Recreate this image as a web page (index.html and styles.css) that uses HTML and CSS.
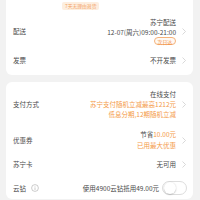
FILE: index.html
```html
<!DOCTYPE html>
<html>
<head>
<meta charset="utf-8">
<link rel="stylesheet" href="styles.css">
</head>
<body>
<div class="card card-top">
  <div class="badge-row"><span class="tag-soft">7天无理由退货</span></div>
  <div class="row row-delivery">
    <span class="label">配送</span>
    <div class="values">
      <span class="line">苏宁配送</span>
      <span class="line">12-07(周六)09:00-21:00</span>
      <span class="tag-outline">次日达</span>
    </div>
    <svg class="chev" viewBox="0 0 4 7"><polyline points="0.5,0.5 3.5,3.5 0.5,6.5"/></svg>
  </div>
  <div class="row row-invoice">
    <span class="label">发票</span>
    <div class="values"><span class="line">不开发票</span></div>
    <svg class="chev" viewBox="0 0 4 7"><polyline points="0.5,0.5 3.5,3.5 0.5,6.5"/></svg>
  </div>
</div>
<div class="card card-pay">
  <div class="row row-pay">
    <span class="label">支付方式</span>
    <div class="values">
      <span class="line">在线支付</span>
      <span class="line orange">苏宁支付随机立减最高1212元</span>
      <span class="line orange">低息分期,12期随机立减</span>
    </div>
    <svg class="chev" viewBox="0 0 4 7"><polyline points="0.5,0.5 3.5,3.5 0.5,6.5"/></svg>
  </div>
  <div class="row row-coupon">
    <span class="label">优惠券</span>
    <div class="values">
      <span class="line line-11">节省<em class="orange">10.00元</em></span>
      <span class="line line-11 orange">已用最大优惠</span>
    </div>
    <svg class="chev" viewBox="0 0 4 7"><polyline points="0.5,0.5 3.5,3.5 0.5,6.5"/></svg>
  </div>
  <div class="row row-card">
    <span class="label">苏宁卡</span>
    <div class="values"><span class="line">无可用</span></div>
    <svg class="chev" viewBox="0 0 4 7"><polyline points="0.5,0.5 3.5,3.5 0.5,6.5"/></svg>
  </div>
  <div class="row row-diamond">
    <span class="label">云钻</span>
    <svg class="info" viewBox="0 0 8 8"><circle cx="4" cy="4" r="3.4"/><line x1="4" y1="3.4" x2="4" y2="6"/><line x1="4" y1="2" x2="4" y2="2.6"/></svg>
    <div class="values"><span class="line">使用4900云钻抵用49.00元</span></div>
    <span class="toggle"><span class="knob"></span></span>
  </div>
</div>
</body>
</html>
```
FILE: styles.css
```css
* { box-sizing: border-box; }
html, body { margin: 0; padding: 0; }
body {
  background: #f2f2f2;
  font-family: "Noto Sans CJK SC", "Noto Sans", sans-serif;
  font-size: 6.5px;
  color: #4a4a4a;
  width: 200px;
  height: 200px;
  overflow: hidden;
}
.card {
  background: #fff;
  border-radius: 6px;
  margin: 0 7px 0 6px;
  padding: 0 7px;
}
.card-top { margin-top: -8px; }
.card-pay { margin-top: 7px; }
.badge-row { padding: 8px 0 0 49px; height: 16px; }
.tag-soft {
  display: inline-flex;
  align-items: center;
  height: 8px;
  padding: 0 3px;
  background: #fdeedf;
  color: #f3a266;
  font-size: 4.8px;
  border-radius: 2px;
}
.row { display: flex; align-items: center; }
.label { flex: none; }
.values {
  flex: 1;
  display: flex;
  flex-direction: column;
  align-items: flex-end;
}
.line { line-height: 10px; white-space: nowrap; }
.line-11 { line-height: 11px; }
.orange { color: #f49a48; }
em { font-style: normal; }
.chev {
  width: 4px;
  height: 7px;
  margin-left: 6px;
  fill: none;
  stroke: #cfcfcf;
  stroke-width: 0.8;
}
.row-delivery { padding-top: 9px; }
.tag-outline {
  display: inline-flex;
  align-items: center;
  height: 8px;
  padding: 0 3px;
  border: 0.6px solid #f5b27a;
  border-radius: 4px;
  color: #f08a35;
  background: #fff9f3;
  font-size: 4.8px;
}
.row-invoice { height: 30px; }
.row-pay { padding-top: 7px; }
.row-coupon { padding-top: 10px; }
.row-card { height: 26px; }
.row-diamond { height: 22px; }
.info {
  width: 8px;
  height: 8px;
  margin-left: 5px;
  fill: none;
  stroke: #aaa;
  stroke-width: 0.6;
}
.toggle {
  flex: none;
  width: 25px;
  height: 14px;
  margin-left: 3px;
  margin-right: -1px;
  border-radius: 7px;
  border: 0.7px solid #ddd;
  background: #fff;
  display: flex;
  align-items: center;
  padding-left: 0.5px;
}
.knob {
  width: 12px;
  height: 12px;
  border-radius: 50%;
  background: #fff;
  box-shadow: 0 0.5px 1.5px rgba(0,0,0,0.3);
}
```
